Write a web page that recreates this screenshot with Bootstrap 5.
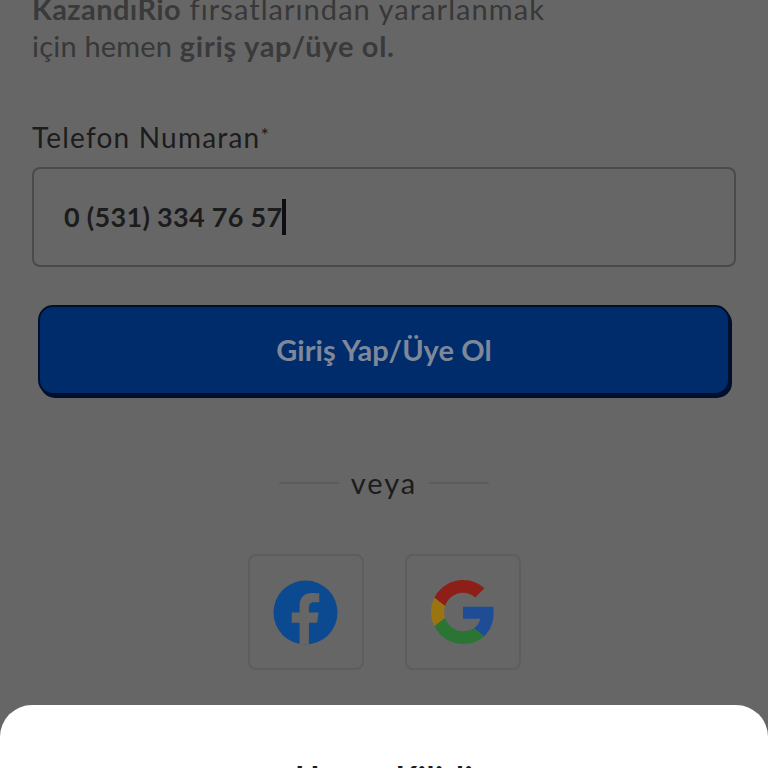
<!DOCTYPE html>
<html lang="tr">
<head>
<meta charset="utf-8">
<title>Giriş</title>
<link href="https://cdn.jsdelivr.net/npm/bootstrap@5.3.0/dist/css/bootstrap.min.css" rel="stylesheet">
<style>
html,body{height:100%;overflow:hidden}
body{background:#666;font-family:"Lato","Noto Sans",sans-serif;color:#1a1a1a}
.screen{height:768px;position:relative;overflow:hidden;padding:0 32px}
.intro{margin-top:-10px;font-size:29px;line-height:37px;color:#383838;letter-spacing:1.05px}
.intro b{font-weight:700;color:#3a3a3a;letter-spacing:.4px}
.intro-tail{letter-spacing:.2px}
.intro-tail b{letter-spacing:.7px}
.phone-label{margin-top:56px;margin-bottom:13px;font-size:28px;line-height:34px;color:#1c1c1c;letter-spacing:1.2px;display:block}
.phone-label sup{font-size:20px;top:-.3em}
.phone-box{height:100px;border:2px solid #4a4a4a;border-radius:8px;padding-left:30px;font-size:27px;font-weight:700;color:#1c1c1c;letter-spacing:.3px}
.caret-bar{display:inline-block;width:4px;height:36px;background:#0e0e12}
.login-btn{height:90px;margin:38px 6px 0 6px;background:#002c6c;border:2px solid #00102c;box-shadow:2px 3px 0 #00102c;border-radius:15px;color:#7e8899;font-size:29px;font-weight:700;letter-spacing:.1px}
.or-row{margin-top:70px;gap:12px;font-size:29px;line-height:36px;color:#1c1c1c;letter-spacing:2px}
.or-line{width:60px;height:2px;background:#5c5c5c}
.social-row{margin-top:53px;gap:41px}
.social-tile{width:116px;height:116px;border:2px solid #5d5d5d;border-radius:8px}
.sheet{position:absolute;left:0;right:0;top:705px;height:200px;background:#fff;border-radius:32px 32px 0 0;text-align:center;padding-top:51px;font-size:32px;font-weight:700;line-height:44px;color:#1c1c1c;letter-spacing:.5px}
</style>
</head>
<body>
<main class="screen">
  <p class="intro mb-0"><b>KazandıRio</b> fırsatlarından yararlanmak<br><span class="intro-tail">için hemen <b>giriş yap/üye ol.</b></span></p>
  <label class="phone-label">Telefon Numaran<sup>*</sup></label>
  <div class="phone-box d-flex align-items-center"><span>0 (531) 334 76 57</span><span class="caret-bar"></span></div>
  <div class="login-btn d-flex align-items-center justify-content-center">Giriş Yap/Üye Ol</div>
  <div class="or-row d-flex align-items-center justify-content-center"><span class="or-line"></span><span>veya</span><span class="or-line"></span></div>
  <div class="social-row d-flex justify-content-center">
    <div class="social-tile d-flex align-items-center justify-content-center">
      <svg width="65" height="65" viewBox="0 0 66 66" aria-label="Facebook"><circle cx="33" cy="33" r="32.500" fill="#0b4a90"/><path fill="#666" d="M27 65.500V43.500H19V33h8v-7c0-8.300 4.900-12.900 12.400-12.900 3.600 0 6.600.3 7.600.4v9h-5.200c-4.100 0-5.300 2.500-5.300 5.100V33h9.800l-1.600 10.500h-8.200v22z"/></svg>
    </div>
    <div class="social-tile d-flex align-items-center justify-content-center">
      <svg width="64" height="64" viewBox="0 0 48 48" aria-label="Google"><path fill="#8d1f18" d="M24 9.500c3.540 0 6.710 1.220 9.210 3.600l6.850-6.850C35.900 2.380 30.470 0 24 0 14.620 0 6.510 5.380 2.560 13.220l7.980 6.190C12.430 13.720 17.740 9.500 24 9.500z"/><path fill="#1e4d96" d="M46.980 24.550c0-1.570-.15-3.090-.38-4.550H24v9.020h12.940c-.58 2.960-2.260 5.480-4.780 7.180l7.730 6c4.510-4.180 7.090-10.360 7.090-17.650z"/><path fill="#9a7410" d="M10.530 28.590c-.48-1.450-.76-2.990-.76-4.590s.27-3.140.76-4.590l-7.980-6.190C.92 16.460 0 20.120 0 24c0 3.880.92 7.540 2.560 10.780l7.970-6.190z"/><path fill="#2a7434" d="M24 48c6.480 0 11.930-2.130 15.890-5.810l-7.730-6c-2.150 1.450-4.920 2.300-8.160 2.300-6.260 0-11.570-4.220-13.470-9.910l-7.980 6.190C6.510 42.620 14.620 48 24 48z"/></svg>
    </div>
  </div>
  <section class="sheet">Hesap Kilitli</section>
</main>
</body>
</html>
